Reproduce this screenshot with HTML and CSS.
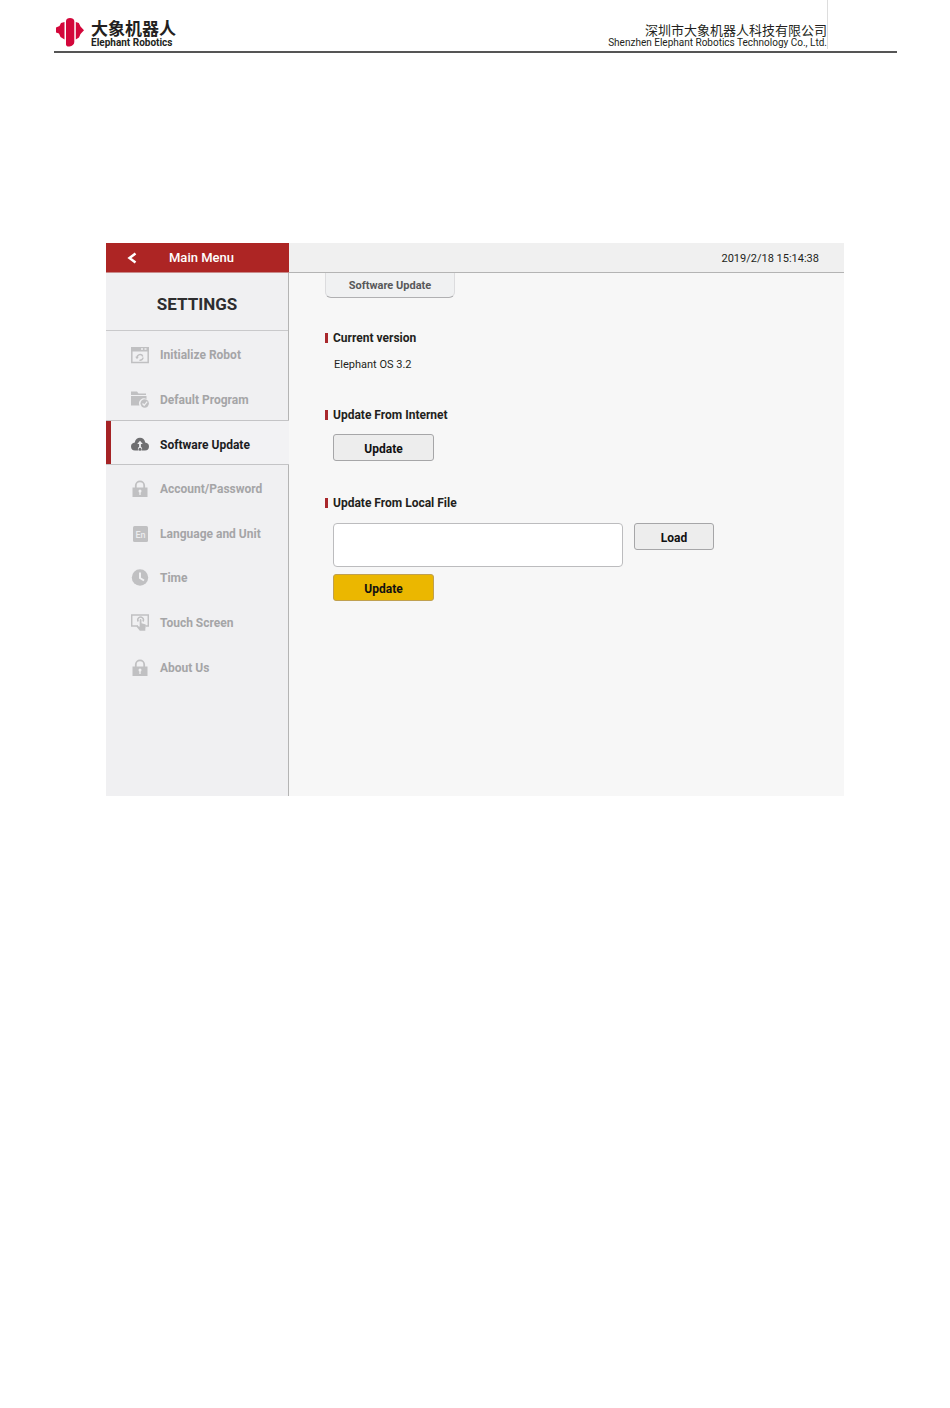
FILE: index.html
```html
<!DOCTYPE html>
<html lang="en">
<head>
  <meta charset="UTF-8" />
  <meta name="viewport" content="width=device-width, initial-scale=1.0"/>
  <title>Settings - Software Update</title>
  <link rel="stylesheet" href="styles.css">
</head>
<body>
  <!-- Header -->
  <header class="header">
    <a class="brand" href="#">
      <svg class="brand-mark" viewBox="0 0 28 29" aria-hidden="true">
        <path d="M8.500 4v17.500L4.500 19 3 15.500 0 14.500V9.500L3.500 8 5 5z"/>
        <path d="M10 3C10 1 11.800 0 14 0s4.300 1 4.300 3v21c0 2.500-2.200 4-4.800 4.500-2 0.300-3.500-0.500-3.500-2z"/>
        <path d="M19.800 4l3 1 1.700 3.500 3.500 3.700-3.500 3.800-1.500 3.500-3.200 2z"/>
      </svg>
      <span class="brand-text">
        <span class="brand-cn" lang="zh">大象机器人</span>
        <span class="brand-en">Elephant Robotics</span>
      </span>
    </a>
    <div class="company">
      <span class="company-cn" lang="zh">深圳市大象机器人科技有限公司</span>
      <span class="company-en">Shenzhen Elephant Robotics Technology Co., Ltd.</span>
    </div>
  </header>

  <!-- Settings screen -->
  <div class="screen">
    <aside class="sidebar">
      <a class="main-menu" href="#">
        <svg class="chevron" viewBox="0 0 10 12" aria-hidden="true"><path d="M8.500 1.500L2.500 6l6 4.500"/></svg>
        <span>Main Menu</span>
      </a>
      <h1 class="sidebar-title">SETTINGS</h1>
      <nav class="menu">
        <a class="menu-item" href="#">
          <svg class="icon" viewBox="0 0 18 18" aria-hidden="true">
            <path class="line" d="M0.800 2h16.400v14.500H0.800z"/>
            <path d="M0 1h18v4.500H0z"/>
            <path class="cut" d="M10 3h2M13.500 3h2"/>
            <path class="line" d="M6 11.500a3 3 0 0 1 5.800-1M12 11.500a3 3 0 0 1-3.500 2.800"/>
            <path d="M4.200 10.800h3.600L6 13.200z"/>
          </svg>
          Initialize Robot
        </a>
        <a class="menu-item" href="#">
          <svg class="icon" viewBox="0 0 18 18" aria-hidden="true">
            <path d="M0 0.500h6l1.500 2H15V4H0zM0 5h15.500v3A5 5 0 0 0 8.500 14.500H0z"/>
            <circle cx="13.700" cy="12.500" r="4.200"/>
            <path class="cut" d="M11.500 12.500l1.700 1.800 3-3.600"/>
          </svg>
          Default Program
        </a>
        <a class="menu-item active" href="#" aria-current="page">
          <svg class="icon" viewBox="0 0 18 18" aria-hidden="true">
            <path d="M4.200 14.500A4.100 4.100 0 0 1 0 10.500C0 8.200 1.600 6.900 3.800 6.600 4.200 3.500 6.200 1.700 9 1.700s4.800 1.800 5.200 4.900C16.400 6.900 18 8.200 18 10.500a4.100 4.100 0 0 1-4.200 4z"/>
            <path class="hole" d="M9 4.800L6.200 8h1.900v3h1.800V8h1.900z"/>
            <circle class="hole" cx="9" cy="13" r="2.200"/>
            <circle cx="9" cy="13.300" r="1.500"/>
          </svg>
          Software Update
        </a>
        <a class="menu-item" href="#">
          <svg class="icon" viewBox="0 0 18 18" aria-hidden="true">
            <path class="shackle" d="M4.800 8V5.500a4.200 4.200 0 0 1 8.400 0V8"/>
            <path d="M1.500 7.500h15V17h-15z"/>
            <circle class="hole" cx="9" cy="11" r="1.500"/>
            <path class="cut" d="M9 12v3"/>
          </svg>
          Account/Password
        </a>
        <a class="menu-item" href="#">
          <svg class="icon" viewBox="0 0 18 18" aria-hidden="true">
            <rect x="2" y="1" width="15" height="16" rx="1.500"/>
            <text x="9.500" y="13">En</text>
          </svg>
          Language and Unit
        </a>
        <a class="menu-item" href="#">
          <svg class="icon" viewBox="0 0 18 18" aria-hidden="true">
            <circle cx="9" cy="8.500" r="8.200"/>
            <path class="cut hands" d="M9 3.500v5.500l4 2.500"/>
          </svg>
          Time
        </a>
        <a class="menu-item" href="#">
          <svg class="icon" viewBox="0 0 18 18" aria-hidden="true">
            <path class="line" d="M7 12H0.700V1h16.600v11H15"/>
            <path class="line" d="M7.300 7.500a2.800 2.800 0 1 1 4.600 0"/>
            <path d="M8.700 6c0-1.200 1.800-1.200 1.800 0v3.300l3.500 0.900c0.800 0.200 1 0.700 0.900 1.500l-0.600 3v2H8.800L5.800 13c-0.500-0.800 0.300-1.500 1-1l1.900 0.800z"/>
          </svg>
          Touch Screen
        </a>
        <a class="menu-item" href="#">
          <svg class="icon" viewBox="0 0 18 18" aria-hidden="true">
            <path class="shackle" d="M4.800 8V5.500a4.200 4.200 0 0 1 8.400 0V8"/>
            <path d="M1.500 7.500h15V17h-15z"/>
            <circle class="hole" cx="9" cy="11" r="1.500"/>
            <path class="cut" d="M9 12v3"/>
          </svg>
          About Us
        </a>
      </nav>
    </aside>

    <div class="main">
      <div class="topbar"><time datetime="2019-02-18T15:14:38">2019/2/18 15:14:38</time></div>
      <main class="content">
        <button class="tab" type="button">Software Update</button>

        <section class="block">
          <h2>Current version</h2>
          <p class="version">Elephant OS 3.2</p>
        </section>

        <section class="block">
          <h2>Update From Internet</h2>
          <button class="btn" type="button">Update</button>
        </section>

        <section class="block">
          <h2><label for="local-file">Update From Local File</label></h2>
          <div class="file-row">
            <textarea class="file-box" id="local-file"></textarea>
            <button class="btn btn-load" type="button">Load</button>
          </div>
          <button class="btn btn-primary" type="button">Update</button>
        </section>
      </main>
    </div>
  </div>
</body>
</html>
```
FILE: styles.css
```css
/* ---------- Global Reset & Typography ---------- */
* {
  box-sizing: border-box;
  margin: 0;
  padding: 0;
}
body {
  background-color: #ffffff;
  color: #231f20;
  font-family: Roboto, "Liberation Sans", sans-serif;
  font-size: 12px;
  line-height: 16px;
}
a {
  color: inherit;
  text-decoration: none;
}

/* ---------- Header ---------- */
.header {
  align-items: flex-end;
  border-bottom: 2px solid #555555;
  display: flex;
  justify-content: space-between;
  margin: 0 53px 0 54px;
  padding-right: 69px;
}
.brand {
  align-items: center;
  display: flex;
  gap: 7px;
  padding: 0 0 2px 2px;
}
.brand-mark {
  fill: #d3073b;
  height: 29px;
  margin-bottom: 2px;
  width: 28px;
}
.brand-text,
.company {
  display: flex;
  flex-direction: column;
}
.brand-cn {
  font-family: "Noto Sans CJK SC", sans-serif;
  font-size: 17px;
  font-weight: 700;
  line-height: 19px;
}
.brand-en {
  font-size: 10px;
  font-weight: 700;
  line-height: 12px;
}
.company {
  align-items: flex-end;
  border-right: 1px solid #dddddd;
  margin-bottom: 2px;
  padding-top: 22px;
}
.company-cn {
  font-family: "Noto Sans CJK SC", sans-serif;
  font-size: 13px;
  line-height: 15px;
}
.company-en {
  font-size: 10px;
  line-height: 12px;
}

/* ---------- Screen ---------- */
.screen {
  background-color: #f7f7f7;
  display: grid;
  grid-template-columns: 183px 1fr;
  margin: 190px 106px 0;
  min-height: 553px;
}

/* ---------- Sidebar ---------- */
.sidebar {
  background-color: #f0f0f2;
  border-right: 1px solid #b4b4b4;
}
.main-menu {
  align-items: center;
  background-color: #ad2524;
  border-bottom: 1px solid #c98a8a;
  color: #ffffff;
  display: flex;
  font-size: 13px;
  font-weight: 500;
  gap: 32px;
  height: 30px;
  margin-right: -1px;
  padding: 1px 0 0 21px;
}
.chevron {
  fill: none;
  height: 12px;
  stroke: #ffffff;
  stroke-width: 2.500;
  width: 10px;
}
.sidebar-title {
  border-bottom: 1px solid #c9c9cb;
  color: #2d2d2f;
  font-size: 17px;
  font-weight: 700;
  height: 58px;
  line-height: 62px;
  text-align: center;
}
.menu {
  display: grid;
  grid-auto-rows: 1fr;
  height: 357px;
}
.menu-item {
  align-items: center;
  color: #a5a5a7;
  display: flex;
  font-size: 12px;
  font-weight: 700;
  gap: 11px;
  padding: 4px 0 0 25px;
}
.menu-item.active {
  background-color: #f2f2f4;
  border: solid #c4c4c6;
  border-width: 1px 0;
  box-shadow: inset 5px 0 #a52325;
  color: #1d1d1f;
  margin-right: -1px;
}

/* ---------- Icons ---------- */
.icon {
  fill: #c0c0c2;
  height: 18px;
  stroke: none;
  width: 18px;
}
.icon .line,
.icon .shackle {
  fill: none;
  stroke: #c0c0c2;
  stroke-width: 1.500;
}
.icon .shackle {
  stroke-width: 1.800;
}
.icon .cut {
  fill: none;
  stroke: #f0f0f2;
  stroke-width: 1.300;
}
.icon .hands {
  stroke-width: 2;
}
.icon .hole {
  fill: #f0f0f2;
}
.icon text {
  fill: #ececee;
  font-size: 9px;
  font-weight: 500;
  text-anchor: middle;
}
.active .icon {
  fill: #6f6f71;
}

/* ---------- Main ---------- */
.topbar {
  background-color: #f0f0f0;
  border-bottom: 1px solid #b4b4b4;
  font-size: 11px;
  height: 30px;
  line-height: 32px;
  padding-right: 25px;
  text-align: right;
}
.content {
  padding: 0 36px;
}
.tab {
  background-color: #f0f1f2;
  border: 1px solid #b8b8ba;
  border-color: #dcdcde;
  border-bottom-color: #b0b0b2;
  border-top: none;
  border-radius: 0 0 6px 6px;
  color: #58585a;
  display: block;
  font: 700 11px/16px Roboto, sans-serif;
  height: 25px;
  padding-top: 2px;
  width: 130px;
}
.block {
  margin-top: 35px;
  padding-left: 8px;
}
.block + .block {
  margin-top: 37px;
}
.block h2 {
  border-left: 3px solid #a9282c;
  font-size: 12px;
  font-weight: 700;
  line-height: 10px;
  margin: 0 0 14px -8px;
  padding-left: 5px;
}
.version {
  font-size: 11px;
  line-height: 16px;
  padding-left: 1px;
}

/* ---------- Controls ---------- */
.btn {
  background-color: #ededed;
  border: 1px solid #a6a6a8;
  border-radius: 3px;
  color: #111111;
  display: block;
  font: 700 12px/16px Roboto, sans-serif;
  height: 27px;
  padding-top: 2px;
  width: 101px;
}
.btn-load {
  width: 80px;
}
.btn-primary {
  background-color: #ebb700;
  border-color: #c0a050;
}
.file-row {
  align-items: flex-start;
  display: flex;
  gap: 11px;
  padding: 1px 0 7px;
}
.file-box {
  background-color: #ffffff;
  border: 1px solid #bcbcbe;
  border-radius: 4px;
  flex: 0 1 290px;
  font: 12px/16px Roboto, sans-serif;
  height: 44px;
  min-width: 0;
  padding: 6px;
  resize: none;
}
```
